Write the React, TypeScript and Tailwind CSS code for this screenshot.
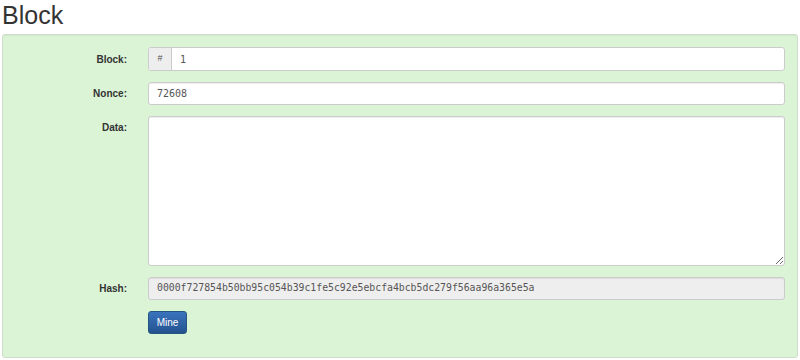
import React from "react";

const sans = { fontFamily: '"Liberation Sans", Arial, sans-serif' };

export default function App() {
  const mono = "font-['DejaVu_Sans_Mono',monospace]";
  return (
    <div className="w-[800px] h-[360px] bg-white overflow-hidden font-['Liberation_Sans',Arial,sans-serif] text-[#333]">
      <h1 className="pl-[2px] pt-[2px] text-[25px] leading-[27px] h-[34px] text-[#333] font-normal">Block</h1>
      <div className="ml-[2px] w-[796px] h-[324px] bg-[#dbf4d6] border border-[#d0dccc] rounded-[3px] shadow-[inset_0_1px_1px_rgba(0,0,0,0.05)] pt-[12px] flex flex-col gap-[11px]">
        <div className="flex items-start">
          <div className="w-[124px] h-[24px] flex items-center justify-end text-[10px] font-bold">Block:</div>
          <div className="ml-[21px] w-[637px] h-[24px] flex border border-[#ccc] rounded-[3px] bg-white overflow-hidden">
            <div className="w-[23px] bg-[#eee] border-r border-[#ccc] flex items-center justify-center text-[9px] text-[#555]">#</div>
            <div className={`flex-1 flex items-center pl-[8px] text-[10px] text-[#555] ${mono}`}>1</div>
          </div>
        </div>
        <div className="flex items-start">
          <div className="w-[124px] h-[23px] flex items-center justify-end text-[10px] font-bold">Nonce:</div>
          <div className={`ml-[21px] w-[637px] h-[23px] flex items-center pl-[8px] border border-[#ccc] rounded-[3px] bg-white shadow-[inset_0_1px_1px_rgba(0,0,0,0.075)] text-[10px] text-[#555] ${mono}`}>72608</div>
        </div>
        <div className="flex items-start">
          <div className="w-[124px] h-[23px] flex items-center justify-end text-[10px] font-bold">Data:</div>
          <textarea className="ml-[21px] w-[637px] h-[150px] border border-[#ccc] rounded-[3px] bg-white shadow-[inset_0_1px_1px_rgba(0,0,0,0.075)] outline-none" defaultValue="" />
        </div>
        <div className="flex items-start">
          <div className="w-[124px] h-[23px] flex items-center justify-end text-[10px] font-bold">Hash:</div>
          <div className={`ml-[21px] w-[637px] h-[23px] flex items-center pl-[8px] border border-[#ccc] rounded-[3px] bg-[#eee] shadow-[inset_0_1px_1px_rgba(0,0,0,0.075)] text-[9.8px] text-[#555] ${mono}`}>0000f727854b50bb95c054b39c1fe5c92e5ebcfa4bcb5dc279f56aa96a365e5a</div>
        </div>
        <div className="flex items-start">
          <div className="ml-[145px] w-[39px] h-[23px] flex items-center justify-center rounded-[3px] border border-[#245580] bg-gradient-to-b from-[#3a74bd] to-[#25528f] text-white text-[10px]" style={sans}>Mine</div>
        </div>
      </div>
    </div>
  );
}
